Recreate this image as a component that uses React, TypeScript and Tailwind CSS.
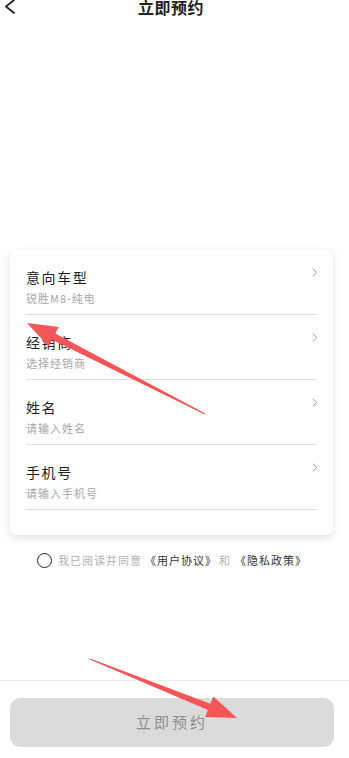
import React from 'react';

type Pt = [number, number];

// red annotation arrow, tapering shaft + triangular head
const arrowPoints = (tail: Pt, tip: Pt) => {
  const dx = tip[0] - tail[0];
  const dy = tip[1] - tail[1];
  const len = Math.hypot(dx, dy);
  const ux = dx / len;
  const uy = dy / len;
  const nx = -uy;
  const ny = ux;
  const headLen = 30;
  const headW = 11;
  const bx = tip[0] - ux * headLen;
  const by = tip[1] - uy * headLen;
  const p = (x: number, y: number) => `${x.toFixed(1)},${y.toFixed(1)}`;
  return [
    p(tail[0] + nx * 0.6, tail[1] + ny * 0.6),
    p(bx + nx * 3.4, by + ny * 3.4),
    p(bx + nx * headW, by + ny * headW),
    p(tip[0], tip[1]),
    p(bx - nx * headW, by - ny * headW),
    p(bx - nx * 3.4, by - ny * 3.4),
    p(tail[0] - nx * 0.6, tail[1] - ny * 0.6),
  ].join(' ');
};

const rows = [
  { label: '意向车型', hint: '锐胜M8-纯电' },
  { label: '经销商', hint: '选择经销商' },
  { label: '姓名', hint: '请输入姓名' },
  { label: '手机号', hint: '请输入手机号' },
];

const Chevron = () => (
  <svg width="6" height="9" viewBox="0 0 6 9" className="shrink-0">
    <polyline points="0.8,0.8 4.8,4.5 0.8,8.2" fill="none" stroke="#9a9a9a" strokeWidth="1" />
  </svg>
);

const App = () => {
  return (
    <div className="relative h-[758px] w-[349px] overflow-hidden bg-white font-['Noto_Sans_CJK_SC',sans-serif] flex flex-col">
      {/* ── header (top is cut off in the shot) ── */}
      <div className="-mt-[15px] h-[44px] w-[342px] flex items-center justify-center relative">
        <svg width="12" height="16" viewBox="0 0 12 16" className="absolute left-[4px] top-[14px]">
          <polyline points="10,1 2,7.5 10,14" fill="none" stroke="#222" strokeWidth="1.8" strokeLinejoin="round" strokeLinecap="round" />
        </svg>
        <h1 className="text-[16px] font-bold text-[#222] tracking-[0.5px]">立即预约</h1>
      </div>

      {/* ── form card ── */}
      <div className="mt-[221px] ml-[10px] mr-[16px] rounded-[7px] bg-white px-[16px] pb-[25px] shadow-[0_3px_8px_rgba(0,0,0,0.12)]">
        {rows.map((r) => (
          <div key={r.label} className="pt-[17px] border-b border-[#dedede]">
            <div className="flex justify-between items-start">
              <div className="text-[14px] leading-[20px] tracking-[1.6px] text-[#222]">{r.label}</div>
              <div className="pt-[1px] -mr-[1px]">
                <Chevron />
              </div>
            </div>
            <div className="mt-[3px] mb-[8px] text-[11px] leading-[16px] tracking-[1px] text-[#a6a6a6]">{r.hint}</div>
          </div>
        ))}
      </div>

      {/* ── agreement ── */}
      <div className="mt-[17px] ml-[37px] flex items-center h-[16px] text-[11px] tracking-[1px]">
        <span className="w-[15px] h-[15px] rounded-full border-[1.5px] border-[#222] shrink-0" />
        <span className="ml-[6px] text-[#b0b0b0]">我已阅读并同意</span>
        <span className="ml-[3px] text-[#333]">《用户协议》</span>
        <span className="ml-[2px] text-[#b0b0b0]">和</span>
        <span className="ml-[4px] text-[#333]">《隐私政策》</span>
      </div>

      <div className="flex-1" />

      {/* ── footer button ── */}
      <div className="border-t border-[#ececec] pt-[17px] pb-[11px]">
        <button className="ml-[10px] w-[324px] h-[49px] rounded-[10px] bg-[#dbdbdb] text-[15px] tracking-[3px] text-[#8c8c8c] flex items-center justify-center">
          立即预约
        </button>
      </div>

      {/* ── red annotation arrows over the screenshot ── */}
      <svg width="349" height="758" className="absolute inset-0 pointer-events-none">
        <polygon points={arrowPoints([205, 414], [27, 323])} fill="#f25656" />
        <polygon points={arrowPoints([90, 659], [237, 718])} fill="#f25656" />
      </svg>
    </div>
  );
};

export default App;
